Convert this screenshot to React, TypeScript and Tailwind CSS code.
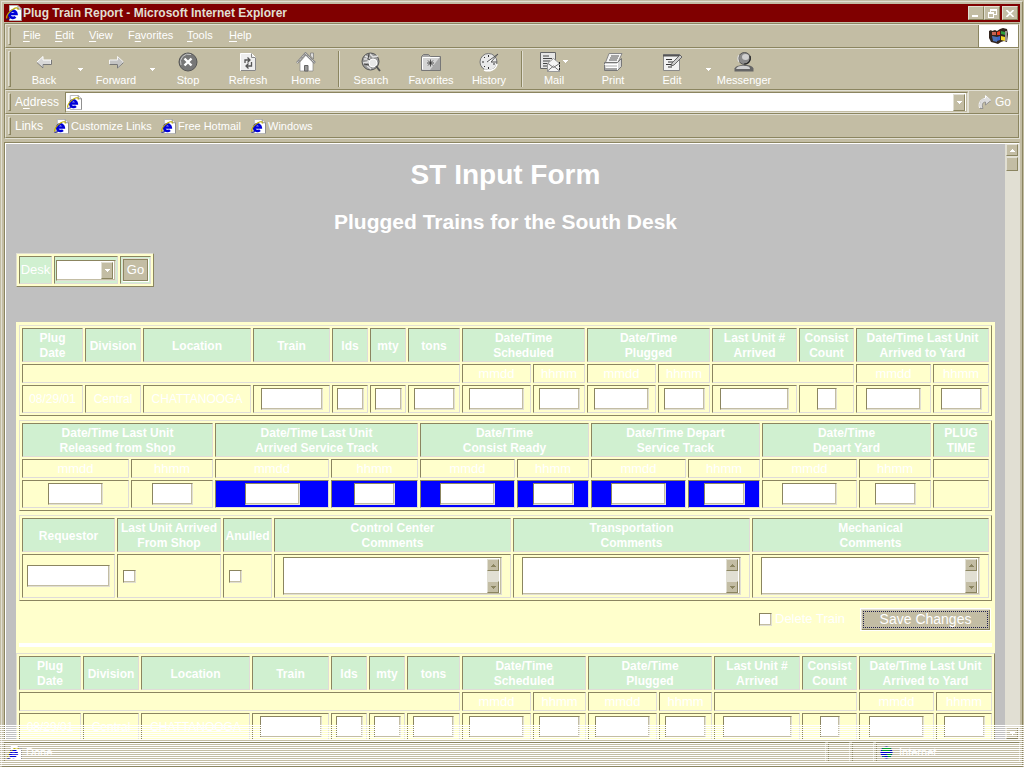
import React from "react";

type Head = { label: string[]; span?: number };
type Field = { w?: string; text?: string; blue?: boolean; name: string };

const W = {
  w20: "w-[20px]",
  w27: "w-[27px]",
  w41: "w-[41px]",
  w55: "w-[55px]",
  w62: "w-[62px]",
  w69: "w-[69px]",
};

const raised =
  "border border-t-[#e1dfd3] border-l-[#e1dfd3] border-r-[#8b8560] border-b-[#8b8560]";
const fieldBox =
  "bg-white border border-t-[#8b8560] border-l-[#8b8560] border-r-[#e1dfd3] border-b-[#e1dfd3] shadow-[inset_-1px_-1px_0_#c3bda4]";
const tableBox =
  "w-full table-fixed border-separate border-spacing-[2px] bg-[#ffffcc] border border-t-[#e1dfd3] border-l-[#e1dfd3] border-r-[#8b8560] border-b-[#8b8560]";
const cell =
  "border border-t-[#8b8560] border-l-[#8b8560] border-r-[#dfdcd8] border-b-[#dfdcd8] p-0";

function IeIcon({ size = "size-[16px]" }: { size?: string }) {
  return (
    <svg viewBox="0 0 16 16" className={`${size} shrink-0`} aria-hidden="true">
      <path d="M3.500 .5h8.500l3.500 3.500v11.500h-12z" fill="#fff" stroke="#b4b4b4" />
      <path d="M12 .5v3.500h3.500v11.500" fill="none" stroke="#8c8c8c" />
      <path d="M3.200 9h7.300a3.600 3.600 0 1 0-1 2.800" fill="none" stroke="#0000d8" strokeWidth="2.600" />
      <path d="M.8 13.500C0 11 3 6.500 7 4.200s5.500-1.200 4.800.6" fill="none" stroke="#c0b000" strokeWidth="1.200" />
      <path d="M.5 14.200c1.500.3 3-.6 4-1.700" fill="none" stroke="#0000a0" />
    </svg>
  );
}

function Tri({ up = false, color = "#fff" }: { up?: boolean; color?: string }) {
  return (
    <svg viewBox="0 0 5 3" className="w-[5px] h-[3px] shrink-0" aria-hidden="true" shapeRendering="crispEdges">
      <path d={up ? "M2 0h1v1h1v1h1v1H0V2h1V1h1z" : "M0 0h5v1H4v1H3v1H2V2H1V1H0z"} fill={color} />
    </svg>
  );
}

function Gripper() {
  return <div className={`w-[3px] h-[18px] ml-[2px] shrink-0 bg-[#c3bda4] ${raised}`} />;
}

const icons: Record<string, React.ReactNode> = {
  Back: (
    <>
      <path d="M3 10l6-5.500v3.500h8v4.500H9V16z" fill="#d8d8d8" stroke="#fff" />
      <path d="M3 10.500L9 16v-3.500h8.500V8" fill="none" stroke="#777" />
    </>
  ),
  Forward: (
    <>
      <path d="M17.500 10l-6-5.500v3.500h-8v4.500h8V16z" fill="#c4c4c4" stroke="#f4f4f4" />
      <path d="M17.500 10.500l-6 5.500v-3.500h-8" fill="none" stroke="#777" />
    </>
  ),
  Stop: (
    <>
      <circle cx="10" cy="10" r="9" fill="#777" stroke="#555" />
      <path d="M3 13A8 8 0 0 1 13 2.500" fill="none" stroke="#c9c9c9" />
      <path d="M6.500 6.500l7 7m0-7l-7 7" stroke="#fff" strokeWidth="2.400" />
    </>
  ),
  Refresh: (
    <>
      <path d="M2.500 1.500h11l4 4v13h-15z" fill="#eee" stroke="#fff" />
      <path d="M13.500 1.500v4h4M3 18.500h14.500V6" fill="none" stroke="#888" />
      <path d="M7 11V8h5M9.500 5.500L12 8l-2.500 2.500M13.500 10v4h-5M10.500 11.500L8 14l2.500 2.500" fill="none" stroke="#555" strokeWidth="1.300" />
    </>
  ),
  Home: (
    <>
      <path d="M14.500 1h3v6l-3-3z" fill="#ddd" stroke="#777" strokeWidth=".7" />
      <path d="M4 10l6-7 7 7v9H4z" fill="#fff" stroke="#888" strokeWidth=".7" />
      <path d="M1 11L9.500 1.500 19 11" fill="none" stroke="#888" strokeWidth="2.500" />
      <path d="M1 11L9.500 1.500 19 11" fill="none" stroke="#eee" strokeWidth="1" strokeDasharray="1 1" />
      <path d="M8.500 13.500h3.500V19H8.500z" fill="#999" stroke="#666" />
    </>
  ),
  Search: (
    <>
      <circle cx="9.500" cy="9.500" r="8.500" fill="#9a9a9a" stroke="#555" />
      <path d="M4 4l4 2-1 4-5 1M9 2l3 3 5-1M6 14l4 3M3 7h3" fill="none" stroke="#e2e2e2" strokeWidth="1.500" />
      <path d="M8 2l-1 5 4 2M3 12l5 1" stroke="#444" fill="none" />
      <circle cx="12" cy="11" r="4" fill="#e8e8e8" stroke="#fff" />
      <path d="M15 14l4 5" stroke="#555" strokeWidth="2" />
    </>
  ),
  Favorites: (
    <>
      <path d="M.5 18.500v-14l2-2h5l2 2h10v14z" fill="#a8a8a8" stroke="#777" />
      <path d="M1.500 5.500h17L9 18H1.500z" fill="#d4d4d4" />
      <path d="M1.500 17.500v-12h17" fill="none" stroke="#fff" />
      <path d="M9.500 7.500v7M6 11h7M7 8.500l5 5m0-5l-5 5" stroke="#333" strokeWidth=".8" />
    </>
  ),
  History: (
    <>
      <circle cx="9.500" cy="10" r="8.500" fill="#e9e9e9" stroke="#777" />
      <path d="M5 18c5 2 12 0 13-6" fill="none" stroke="#fff" strokeWidth="1.500" />
      <path d="M9.500 3v2M9.500 15v2M3 10h2M14 12h2M5 5l1 1M5 15l1-1" stroke="#333" />
      <path d="M8 10l11-8-7 8h6" fill="#fff" stroke="#555" />
    </>
  ),
  Mail: (
    <>
      <path d="M.5.500h15v16H.5z" fill="#e6e6e6" stroke="#666" />
      <path d="M3 4h6M3 6.500h9M3 9h7M3 11.500h5M3 14h4" stroke="#444" />
      <path d="M7.500 11.500l6-5 6 5v8h-12z" fill="#f5f5f5" stroke="#999" />
      <path d="M7.500 19l6-5 6 5M8 11.500l5.500 4 6-4" fill="none" stroke="#777" />
      <path d="M19.500 10v9" stroke="#222" strokeDasharray="2 1" />
    </>
  ),
  Print: (
    <>
      <path d="M6 1.500h13l-4 9H2.500z" fill="#f5f5f5" stroke="#888" />
      <path d="M8 4h8M7 6h8M6 8h8" stroke="#555" />
      <path d="M1.500 10.500h13l4-4v8l-4 4h-13z" fill="#d5d5d5" stroke="#777" />
      <path d="M1.500 12.500h13M3 15.500h11M14.500 11v7" stroke="#fff" />
      <path d="M2 17h12" stroke="#777" />
    </>
  ),
  Edit: (
    <>
      <path d="M1.500 2.500h16v16h-16z" fill="#f2f2f2" stroke="#888" />
      <path d="M1 3.500h17" stroke="#555" strokeWidth="2" />
      <path d="M4 7.500h6M6 10h5M4 12.500h6M6 15h4" stroke="#333" />
      <path d="M9 14l1-3 8-8 2 2-8 8z" fill="#ccc" stroke="#666" />
    </>
  ),
  Messenger: (
    <>
      <circle cx="10.500" cy="6.500" r="6" fill="#8a8a8a" stroke="#555" />
      <path d="M5 3a6.500 6.500 0 0 0 0 7" fill="none" stroke="#ddd" strokeWidth="1.200" />
      <path d="M16 4c1 4-1 8-6 8" fill="none" stroke="#222" strokeWidth="1.200" />
      <ellipse cx="11.500" cy="5" rx="3.500" ry="3" fill="#d0d0d0" />
      <path d="M.5 19.500v-3c1-2.500 4-3 7-3.500h6c3 .5 5.500 1.500 6 3.500v3z" fill="#666" />
      <path d="M2 17c1-3 5-3.500 9-3 4 0 5 1 5 3z" fill="#d0d0d0" />
    </>
  ),
};

const tools: { name: string; w: string; drop?: boolean }[] = [
  { name: "Back", w: "w-[52px]" },
  { name: "v", w: "w-[20px]" },
  { name: "Forward", w: "w-[52px]" },
  { name: "v", w: "w-[20px]" },
  { name: "Stop", w: "w-[52px]" },
  { name: "Refresh", w: "w-[68px]" },
  { name: "Home", w: "w-[48px]" },
  { name: "|", w: "w-[17px]" },
  { name: "Search", w: "w-[48px]" },
  { name: "Favorites", w: "w-[72px]" },
  { name: "History", w: "w-[44px]" },
  { name: "|", w: "w-[22px]" },
  { name: "Mail", w: "w-[42px]", drop: true },
  { name: "Print", w: "w-[76px]" },
  { name: "Edit", w: "w-[42px]" },
  { name: "v", w: "w-[30px]" },
  { name: "Messenger", w: "w-[42px]" },
];

function Toolbar() {
  return (
    <div className={`flex items-center h-[42px] ${raised}`}>
      <div className={`w-[3px] h-[36px] ml-[2px] mr-[7px] shrink-0 ${raised}`} />
      {tools.map((t, i) => {
        if (t.name === "|")
          return (
            <div key={i} className={`${t.w} flex justify-center shrink-0`}>
              <div className="w-[2px] h-[36px] border-l border-l-[#8b8560] border-r border-r-[#e1dfd3]" />
            </div>
          );
        if (t.name === "v")
          return (
            <button key={i} aria-label="More" className={`${t.w} flex justify-center shrink-0`}>
              <Tri />
            </button>
          );
        return (
          <button key={i} className={`${t.w} flex flex-col items-center shrink-0 text-[11px] leading-[14px] whitespace-nowrap`}>
            <span className="flex items-center gap-[3px]">
              <svg viewBox="0 0 20 20" className="size-[20px] shrink-0" aria-hidden="true">
                {icons[t.name]}
              </svg>
              {t.drop && <Tri />}
            </span>
            <span className="mt-[1px]">{t.name}</span>
          </button>
        );
      })}
    </div>
  );
}

const menus: [string, string, string, string][] = [
  ["", "F", "ile", "w-[32px]"],
  ["", "E", "dit", "w-[34px]"],
  ["", "V", "iew", "w-[39px]"],
  ["F", "a", "vorites", "w-[59px]"],
  ["", "T", "ools", "w-[42px]"],
  ["", "H", "elp", "w-[40px]"],
];

function Chrome() {
  return (
    <>
      <div className="flex items-center h-[18px] bg-[#800000] pl-[2px] pr-[2px]">
        <IeIcon />
        <h1 className="ml-[1px] text-[12px] leading-[16px] font-bold text-[#e1dfd3] whitespace-nowrap">
          Plug Train Report - Microsoft Internet Explorer
        </h1>
        <div className="ml-auto flex">
          <button aria-label="Minimize" className={`w-[16px] h-[14px] bg-[#c3bda4] ${raised} flex items-end justify-center pb-[2px]`}>
            <span className="w-[6px] h-[2px] bg-white mr-[2px]" />
          </button>
          <button aria-label="Restore" className={`w-[16px] h-[14px] bg-[#c3bda4] ${raised} flex items-center justify-center`}>
            <svg viewBox="0 0 9 9" className="size-[9px]" shapeRendering="crispEdges">
              <path d="M2 0h7v6H6V5h2V2H3v1H2zM0 3h6v6H0zM1 5v3h4V5z" fill="#fff" fillRule="evenodd" />
            </svg>
          </button>
          <button aria-label="Close" className={`w-[16px] h-[14px] ml-[2px] bg-[#c3bda4] ${raised} flex items-center justify-center`}>
            <svg viewBox="0 0 8 7" className="w-[8px] h-[7px]">
              <path d="M.5 0l7 7m0-7l-7 7" stroke="#fff" strokeWidth="1.600" />
            </svg>
          </button>
        </div>
      </div>
      <div className="mt-px border border-t-[#8b8560] border-l-[#8b8560] border-r-[#e1dfd3] border-b-[#e1dfd3] text-white">
        <nav className={`flex items-center h-[24px] text-[11px] leading-[14px] ${raised}`}>
          <Gripper />
          <div className="flex ml-[12px] pb-[2px]">
            {menus.map(([a, b, c, w]) => (
              <button key={b + c} className={`${w} text-left`}>
                {a}
                <u className="underline-offset-2">{b}</u>
                {c}
              </button>
            ))}
          </div>
          <div className="ml-auto h-full w-[40px] bg-white border-l border-l-[#8b8560] flex items-center justify-center">
            <svg viewBox="0 0 20 16" className="w-[20px] h-[16px]" aria-hidden="true">
              <path d="M0 3l2-1 1 1 3-1 2 1 3-2 3-1 4 1 1 5-1 8-3-1-3 1-3 2-3-1-4-1-2-4z" fill="#32241d" />
              <path d="M3 4h4v3H3z" fill="#c86450" />
              <path d="M8 4l3-1v4H8z" fill="#f03c1e" />
              <path d="M12 3l4 1v3l-4-1z" fill="#2c9c3c" />
              <path d="M3 8l5 1v5l-4-1z" fill="#4a72b8" />
              <path d="M8 9l3-1v4l-3 1z" fill="#3c64c8" />
              <path d="M12 8l4 1v4l-4-1z" fill="#f4d828" />
              <path d="M17 3v10" stroke="#fff" strokeWidth="1" />
            </svg>
          </div>
        </nav>
        <Toolbar />
        <div className={`flex items-center h-[24px] ${raised}`}>
          <Gripper />
          <label htmlFor="addr" className="ml-[4px] w-[50px] text-[12px] leading-[14px]">
            A<u className="underline-offset-2">d</u>dress
          </label>
          <div className={`flex-1 flex items-center h-[21px] pl-[1px] pr-[2px] ${fieldBox}`}>
            <IeIcon size="size-[15px]" />
            <input id="addr" className="flex-1 min-w-0 outline-none text-black text-[12px]" />
            <button aria-label="Show addresses" className={`w-[12px] h-[17px] bg-[#c3bda4] ${raised} flex items-center justify-center`}>
              <Tri />
            </button>
          </div>
          <button className="flex items-center gap-[3px] w-[50px] h-full pl-[9px] text-[12px] leading-[14px] border-l border-l-[#e1dfd3]">
            <svg viewBox="0 0 14 16" className="w-[14px] h-[16px] shrink-0" aria-hidden="true">
              <path d="M2 14.500C0 8.500 3 4.500 7.500 4.500V1.500L13 6.500l-5.500 4.500V8C5 8 3.500 10 5 14.500z" fill="#ddd" stroke="#888" strokeWidth=".8" />
              <path d="M1.500 14C0 8.500 3 4.500 7.500 4.500V1.500L13 6.500" fill="none" stroke="#fff" />
            </svg>
            Go
          </button>
        </div>
        <div className={`flex items-center h-[24px] text-[11px] leading-[14px] ${raised}`}>
          <Gripper />
          <span className="ml-[4px] w-[39px] text-[12px]">Links</span>
          <a href="#customize" className="flex items-center gap-[2px] w-[107px] whitespace-nowrap">
            <IeIcon size="size-[15px]" />
            Customize Links
          </a>
          <a href="#hotmail" className="flex items-center gap-[2px] w-[90px] whitespace-nowrap">
            <IeIcon size="size-[15px]" />
            Free Hotmail
          </a>
          <a href="#windows" className="flex items-center gap-[2px] whitespace-nowrap">
            <IeIcon size="size-[15px]" />
            Windows
          </a>
        </div>
      </div>
    </>
  );
}

function Grid({ cols, heads, subs, fields }: { cols: number[]; heads: Head[]; subs: { label: string; span?: number }[]; fields: Field[] }) {
  return (
    <table className={tableBox}>
      <colgroup>
        {cols.map((c, i) => (
          <col key={i} style={{ width: c }} />
        ))}
      </colgroup>
      <thead>
        <tr className="h-[34px]">
          {heads.map((h, i) => (
            <HeadCell key={i} {...h} />
          ))}
        </tr>
        <tr className="h-[19px]">
          {subs.map((s, i) => (
            <td key={i} colSpan={s.span ?? 1} className={`${cell} text-center text-[13px] leading-[16px]`}>
              {s.label}
            </td>
          ))}
        </tr>
      </thead>
      <tbody>
        <tr className="h-[28px]">
          {fields.map((f, i) => (
            <td key={i} className={`${cell} text-center text-[12px] leading-[15px] ${f.blue ? "bg-[#0000ff]" : ""}`}>
              {f.text}
              {f.w && <input aria-label={f.name} className={`block mx-auto h-[22px] px-1 text-black outline-none ${f.w} ${fieldBox}`} />}
            </td>
          ))}
        </tr>
      </tbody>
    </table>
  );
}

function HeadCell({ label, span = 1 }: Head) {
  return (
    <th colSpan={span} className={`${cell} bg-[#d0f0d0] text-[12px] leading-[15px] font-bold whitespace-nowrap`}>
      <div className="pt-[2px]">
        {label.map((l) => (
          <div key={l}>{l}</div>
        ))}
      </div>
    </th>
  );
}

const mm = { label: "mmdd" };
const hh = { label: "hhmm" };

function ArrivalTable({ cols }: { cols: number[] }) {
  return (
    <Grid
      cols={cols}
      heads={[
        { label: ["Plug", "Date"] },
        { label: ["Division"] },
        { label: ["Location"] },
        { label: ["Train"] },
        { label: ["lds"] },
        { label: ["mty"] },
        { label: ["tons"] },
        { label: ["Date/Time", "Scheduled"], span: 2 },
        { label: ["Date/Time", "Plugged"], span: 2 },
        { label: ["Last Unit #", "Arrived"] },
        { label: ["Consist", "Count"] },
        { label: ["Date/Time Last Unit", "Arrived to Yard"], span: 2 },
      ]}
      subs={[{ label: "", span: 7 }, mm, hh, mm, hh, { label: "", span: 2 }, mm, hh]}
      fields={[
        { name: "Plug date", text: "08/29/01" },
        { name: "Division", text: "Central" },
        { name: "Location", text: "CHATTANOOGA" },
        { name: "Train", w: W.w62 },
        { name: "Loads", w: W.w27 },
        { name: "Empties", w: W.w27 },
        { name: "Tons", w: W.w41 },
        { name: "Scheduled date", w: W.w55 },
        { name: "Scheduled time", w: W.w41 },
        { name: "Plugged date", w: W.w55 },
        { name: "Plugged time", w: W.w41 },
        { name: "Last unit number", w: W.w69 },
        { name: "Consist count", w: W.w20 },
        { name: "Yard date", w: W.w55 },
        { name: "Yard time", w: W.w41 },
      ]}
    />
  );
}

function ServiceTable() {
  return (
    <Grid
      cols={[107, 82, 114, 87, 95, 72, 95, 72, 95, 72, 56]}
      heads={[
        { label: ["Date/Time Last Unit", "Released from Shop"], span: 2 },
        { label: ["Date/Time Last Unit", "Arrived Service Track"], span: 2 },
        { label: ["Date/Time", "Consist Ready"], span: 2 },
        { label: ["Date/Time Depart", "Service Track"], span: 2 },
        { label: ["Date/Time", "Depart Yard"], span: 2 },
        { label: ["PLUG", "TIME"] },
      ]}
      subs={[mm, hh, mm, hh, mm, hh, mm, hh, mm, hh, { label: "" }]}
      fields={[
        { name: "Released date", w: W.w55 },
        { name: "Released time", w: W.w41 },
        { name: "Service track date", w: W.w55, blue: true },
        { name: "Service track time", w: W.w41, blue: true },
        { name: "Consist ready date", w: W.w55, blue: true },
        { name: "Consist ready time", w: W.w41, blue: true },
        { name: "Depart track date", w: W.w55, blue: true },
        { name: "Depart track time", w: W.w41, blue: true },
        { name: "Depart yard date", w: W.w55 },
        { name: "Depart yard time", w: W.w41 },
        { name: "Plug time" },
      ]}
    />
  );
}

const check = `block appearance-none size-[13px] ${fieldBox}`;

function CommentBox({ name }: { name: string }) {
  const btn = `w-[12px] h-[12px] bg-[#c3bda4] ${raised} flex items-center justify-center`;
  return (
    <div className={`mx-auto flex w-[219px] h-[38px] p-px pr-[2px] ${fieldBox}`}>
      <textarea aria-label={name} className="flex-1 min-w-0 resize-none outline-none overflow-hidden text-black text-[12px]" />
      <div className="flex flex-col justify-between w-[12px] bg-[#e1dfd3]">
        <button aria-label="Scroll up" className={btn}>
          <Tri up color="#8b8560" />
        </button>
        <button aria-label="Scroll down" className={btn}>
          <Tri color="#8b8560" />
        </button>
      </div>
    </div>
  );
}

function CommentsTable() {
  return (
    <table className={tableBox}>
      <colgroup>
        {[93, 104, 49, 237, 237, 237].map((c, i) => (
          <col key={i} style={{ width: c }} />
        ))}
      </colgroup>
      <thead>
        <tr className="h-[34px]">
          <HeadCell label={["Requestor"]} />
          <HeadCell label={["Last Unit Arrived", "From Shop"]} />
          <HeadCell label={["Anulled"]} />
          <HeadCell label={["Control Center", "Comments"]} />
          <HeadCell label={["Transportation", "Comments"]} />
          <HeadCell label={["Mechanical", "Comments"]} />
        </tr>
      </thead>
      <tbody>
        <tr className="h-[44px]">
          <td className={cell}>
            <input aria-label="Requestor" className={`block mx-auto w-[83px] h-[22px] px-1 text-black outline-none ${fieldBox}`} />
          </td>
          <td className={cell}>
            <input type="checkbox" aria-label="Last unit arrived from shop" className={`ml-[5px] ${check}`} />
          </td>
          <td className={cell}>
            <input type="checkbox" aria-label="Anulled" className={`ml-[5px] ${check}`} />
          </td>
          <td className={cell}><CommentBox name="Control center comments" /></td>
          <td className={cell}><CommentBox name="Transportation comments" /></td>
          <td className={cell}><CommentBox name="Mechanical comments" /></td>
        </tr>
      </tbody>
    </table>
  );
}

function DeskPicker() {
  const c = `${cell} bg-[#d0f0d0] flex items-center justify-center`;
  return (
    <form
      onSubmit={(e) => e.preventDefault()}
      className={`flex gap-[2px] p-[2px] w-fit h-[34px] bg-[#ffffcc] text-[13px] leading-[16px] ${raised}`}
    >
      <label htmlFor="desk" className={`${c} w-[33px]`}>
        Desk
      </label>
      <div className={`${c} w-[64px]`}>
        <div className={`grid w-[60px] h-[21px] ${fieldBox}`}>
          <select id="desk" className="col-start-1 row-start-1 appearance-none outline-none text-black px-1">
            <option></option>
          </select>
          <span className={`col-start-1 row-start-1 justify-self-end self-center mr-[2px] w-[12px] h-[17px] bg-[#c3bda4] pointer-events-none flex items-center justify-center ${raised}`}>
            <Tri />
          </span>
        </div>
      </div>
      <div className={`${c} w-[31px]`}>
        <button className="w-[27px] h-[24px] bg-[#c3bda4] border border-[#fff] border-t-[#e1dfd3] border-l-[#e1dfd3] shadow-[inset_-1px_-1px_0_#8b8560,inset_1px_1px_0_#8b8560]">
          Go
        </button>
      </div>
    </form>
  );
}

function ScrollBar() {
  const btn = `w-[12px] shrink-0 bg-[#c3bda4] ${raised} flex items-center justify-center`;
  return (
    <div className="flex flex-col w-[14px] pl-px pr-px shrink-0 bg-[#e1dfd3]">
      <button aria-label="Page up" className={`${btn} h-[12px]`}>
        <Tri up />
      </button>
      <div className={`${btn} h-[14px] mt-px`} />
      <button aria-label="Page down" className={`${btn} h-[12px] mt-auto`}>
        <Tri />
      </button>
    </div>
  );
}

function StatusBar() {
  const pane = "h-[20px] flex items-center border border-t-[#8b8560] border-l-[#8b8560] border-r-[#e1dfd3] border-b-[#e1dfd3]";
  return (
    <footer className="flex items-center gap-[2px] h-[24px] shrink-0 text-white text-[11px] leading-[14px]">
      <div className={`${pane} flex-1 gap-[4px] pl-[2px]`}>
        <IeIcon size="size-[15px]" />
        Done
      </div>
      <div className={`${pane} w-[22px]`} />
      <div className={`${pane} w-[22px]`} />
      <div className={`${pane} w-[144px] gap-[6px] pl-[3px]`}>
        <svg viewBox="0 0 14 14" className="size-[13px]" aria-hidden="true">
          <circle cx="7" cy="7" r="6.500" fill="#0000d0" />
          <path d="M2 3l4-2 6 1-1 3-5 1-4-1zM7 9l6-2-1 4-3 2zM2 10l3 1-1 2z" fill="#00a020" />
        </svg>
        Internet
      </div>
    </footer>
  );
}

export default function App() {
  return (
    <div className="relative h-screen bg-[#c3bda4] p-px overflow-hidden font-['Liberation_Sans',Arial,sans-serif]">
      <div className={`flex flex-col h-full p-[2px] ${raised}`}>
        <Chrome />
        <div className="flex flex-1 min-h-0 mt-[3px] border border-t-[#8b8560] border-l-[#8b8560] border-r-[#e1dfd3] border-b-[#e1dfd3]">
          <div className="flex flex-1 min-w-0 border-t border-l border-white">
            <main className="flex-1 min-w-0 overflow-hidden bg-[#c0c0c0] px-[10px] pt-[15px] text-white">
              <h1 className="text-center text-[28px] leading-[32px] font-bold">ST Input Form</h1>
              <h2 className="mt-[19px] text-center text-[21px] leading-[24px] font-bold">Plugged Trains for the South Desk</h2>
              <div className="mt-[19px]">
                <DeskPicker />
              </div>
              <section className="mt-[35px] bg-[#ffffcc]">
                <div className="flex flex-col gap-[4px] px-[3px] pt-[3px]">
                  <ArrivalTable cols={[61, 56, 108, 77, 36, 36, 52, 69, 52, 69, 52, 85, 55, 75, 56]} />
                  <ServiceTable />
                  <CommentsTable />
                </div>
                <div className="flex items-center justify-end h-[36px] pr-[4px]">
                  <label className="flex items-center gap-[3px] w-[101px] text-[13px] leading-[16px]">
                    <input type="checkbox" className={check} />
                    Delete Train
                  </label>
                  <button className="w-[131px] h-[23px] p-[2px] bg-[#c3bda4] border border-white shadow-[inset_1px_1px_0_#e1dfd3,inset_-1px_-1px_0_#8b8560] text-[14px]">
                    <span className="flex items-center justify-center h-full border border-dotted border-[#202050]">Save Changes</span>
                  </button>
                </div>
                <div className="mx-[3px] mt-[6px] mb-[6px] h-[4px] bg-white" />
                <ArrivalTable cols={[62, 56, 109, 77, 36, 36, 53, 69, 53, 69, 53, 86, 55, 75, 56]} />
              </section>
            </main>
            <ScrollBar />
          </div>
        </div>
        <StatusBar />
      </div>
      <div className="absolute inset-x-0 bottom-0 h-[43px] pointer-events-none bg-[repeating-linear-gradient(to_bottom,#fff_0px,#fff_1px,transparent_1px,transparent_2px)]" />
    </div>
  );
}
